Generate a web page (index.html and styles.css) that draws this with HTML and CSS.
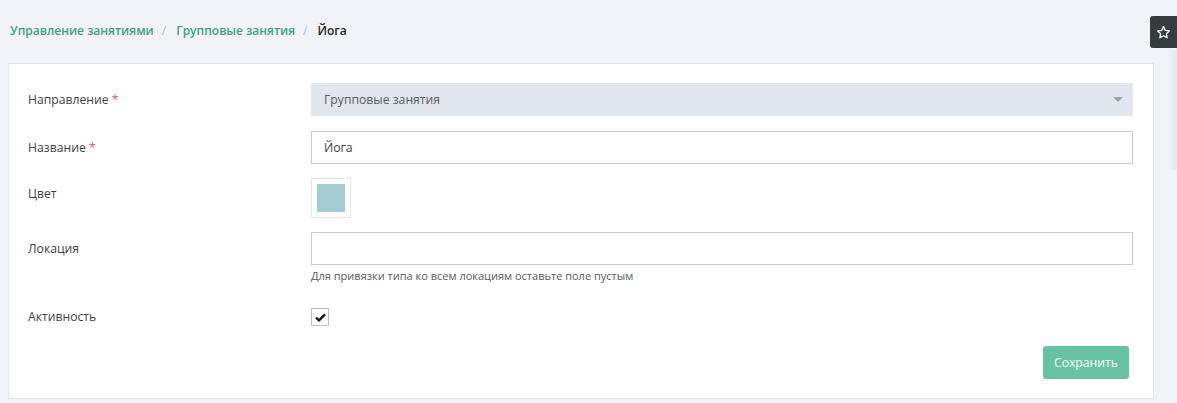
FILE: index.html
```html
<!DOCTYPE html>
<html lang="ru">

<head>
    <meta charset="UTF-8">
    <meta name="viewport" content="width=device-width, initial-scale=1.0">
    <title>Йога</title>
    <link rel="stylesheet" href="styles.css">
</head>

<body>
    <div class="page">
        <!-- Breadcrumbs -->
        <div class="crumbs">
            <a href="#">Управление занятиями</a>
            <span class="sep">/</span>
            <a href="#">Групповые занятия</a>
            <span class="sep">/</span>
            <span class="current">Йога</span>
        </div>

        <!-- Form -->
        <div class="card">
            <div class="row">
                <label class="label">Направление <span class="req">*</span></label>
                <div class="field">
                    <div class="select">
                        <span>Групповые занятия</span>
                        <span class="caret"></span>
                    </div>
                </div>
            </div>
            <div class="row">
                <label class="label">Название <span class="req">*</span></label>
                <div class="field">
                    <input class="input" type="text" value="Йога">
                </div>
            </div>
            <div class="row row-color">
                <label class="label">Цвет</label>
                <div class="field">
                    <div class="swatch"><div class="swatch-fill"></div></div>
                </div>
            </div>
            <div class="row">
                <label class="label">Локация</label>
                <div class="field">
                    <input class="input" type="text" value="">
                    <div class="help">Для привязки типа ко всем локациям оставьте поле пустым</div>
                </div>
            </div>
            <div class="row row-check">
                <label class="label">Активность</label>
                <div class="field">
                    <span class="check">
                        <svg width="11" height="9" viewBox="0 0 11 9">
                            <path d="M1 4.6 L4 7.4 L10 1.4" fill="none" stroke="#111" stroke-width="2.2" />
                        </svg>
                    </span>
                </div>
            </div>
            <div class="actions">
                <button class="save">Сохранить</button>
            </div>
        </div>
    </div>

    <button class="fav">
        <svg width="15" height="15" viewBox="0 0 24 24">
            <path d="M12 2.5 L14.9 8.6 L21.5 9.4 L16.6 13.9 L17.9 20.5 L12 17.2 L6.1 20.5 L7.4 13.9 L2.5 9.4 L9.1 8.6 Z"
                fill="none" stroke="#fff" stroke-width="2" stroke-linejoin="round" />
        </svg>
    </button>
    <div class="edge"></div>
</body>

</html>
```

FILE: styles.css
```css
html,
body {
    margin: 0;
    height: 100%;
}

body {
    background-color: #f2f3f8;
    font-family: "Open Sans", sans-serif;
    font-size: 12.2px;
    color: #3f4047;
    overflow: hidden;
}

.page {
    padding: 19px 23px 0 8px;
}

.crumbs {
    display: flex;
    align-items: center;
    height: 22px;
    padding-left: 2px;
    font-weight: 600;
    font-size: 12px;
}

.crumbs a {
    color: #3a9f89;
    text-decoration: none;
}

.crumbs .sep {
    color: #b5b8c4;
    font-weight: 400;
    margin: 0 10px 0 8px;
}

.crumbs .current {
    color: #222;
}

.card {
    margin-top: 22px;
    background-color: #fff;
    border: 1px solid #e4e6ee;
    padding: 19px 20px 17px 19px;
    height: 298px;
}

.row {
    display: flex;
    align-items: flex-start;
    margin-bottom: 15px;
}

.label {
    width: 283px;
    line-height: 33px;
    color: #3f4047;
    flex-shrink: 0;
}

.req {
    color: #f4516c;
}

.field {
    flex: 1;
}

.select {
    display: flex;
    align-items: center;
    justify-content: space-between;
    height: 33px;
    background-color: #e2e6ee;
    padding: 0 10px 0 13px;
    color: #575962;
}

.caret {
    width: 0;
    height: 0;
    border-left: 5px solid transparent;
    border-right: 5px solid transparent;
    border-top: 5px solid #9aa3b8;
}

.input {
    display: block;
    box-sizing: border-box;
    width: 100%;
    height: 33px;
    border: 1px solid #c4cad6;
    padding: 0 12px;
    font-family: "Open Sans", sans-serif;
    font-size: 12.2px;
    color: #3f4047;
    outline: none;
}

.row-color {
    margin-top: -1px;
    margin-bottom: 14px;
}

.row-color .label {
    line-height: 32px;
}

.swatch {
    box-sizing: border-box;
    width: 40px;
    height: 40px;
    border: 1px solid #e2e5ec;
    padding: 5px;
}

.swatch-fill {
    width: 28px;
    height: 28px;
    background-color: #a2cbd2;
}

.help {
    margin-top: 3px;
    font-size: 11px;
    color: #575962;
}

.row-check {
    margin-top: 25px;
    margin-bottom: 0;
    align-items: center;
}

.row-check .label {
    line-height: 18px;
}

.check {
    box-sizing: border-box;
    display: flex;
    align-items: center;
    justify-content: center;
    width: 18px;
    height: 18px;
    border: 1px solid #b9bfcc;
}

.actions {
    display: flex;
    justify-content: flex-end;
    margin-top: 20px;
    padding-right: 4px;
}

.save {
    background-color: #66c2a3;
    color: #fff;
    border: none;
    border-radius: 3px;
    height: 33px;
    padding: 0 11px;
    font-family: "Open Sans", sans-serif;
    font-size: 12.2px;
    cursor: pointer;
}

.fav {
    position: absolute;
    top: 16px;
    right: 0;
    width: 27px;
    height: 32px;
    border: none;
    border-radius: 3px 0 0 3px;
    background-color: #353c3f;
    display: flex;
    align-items: center;
    justify-content: center;
    padding: 0;
}

.edge {
    position: absolute;
    top: 50px;
    right: 0;
    width: 10px;
    height: 120px;
    background: linear-gradient(to left, #e6e8ee, rgba(242, 243, 248, 0));
}
```
